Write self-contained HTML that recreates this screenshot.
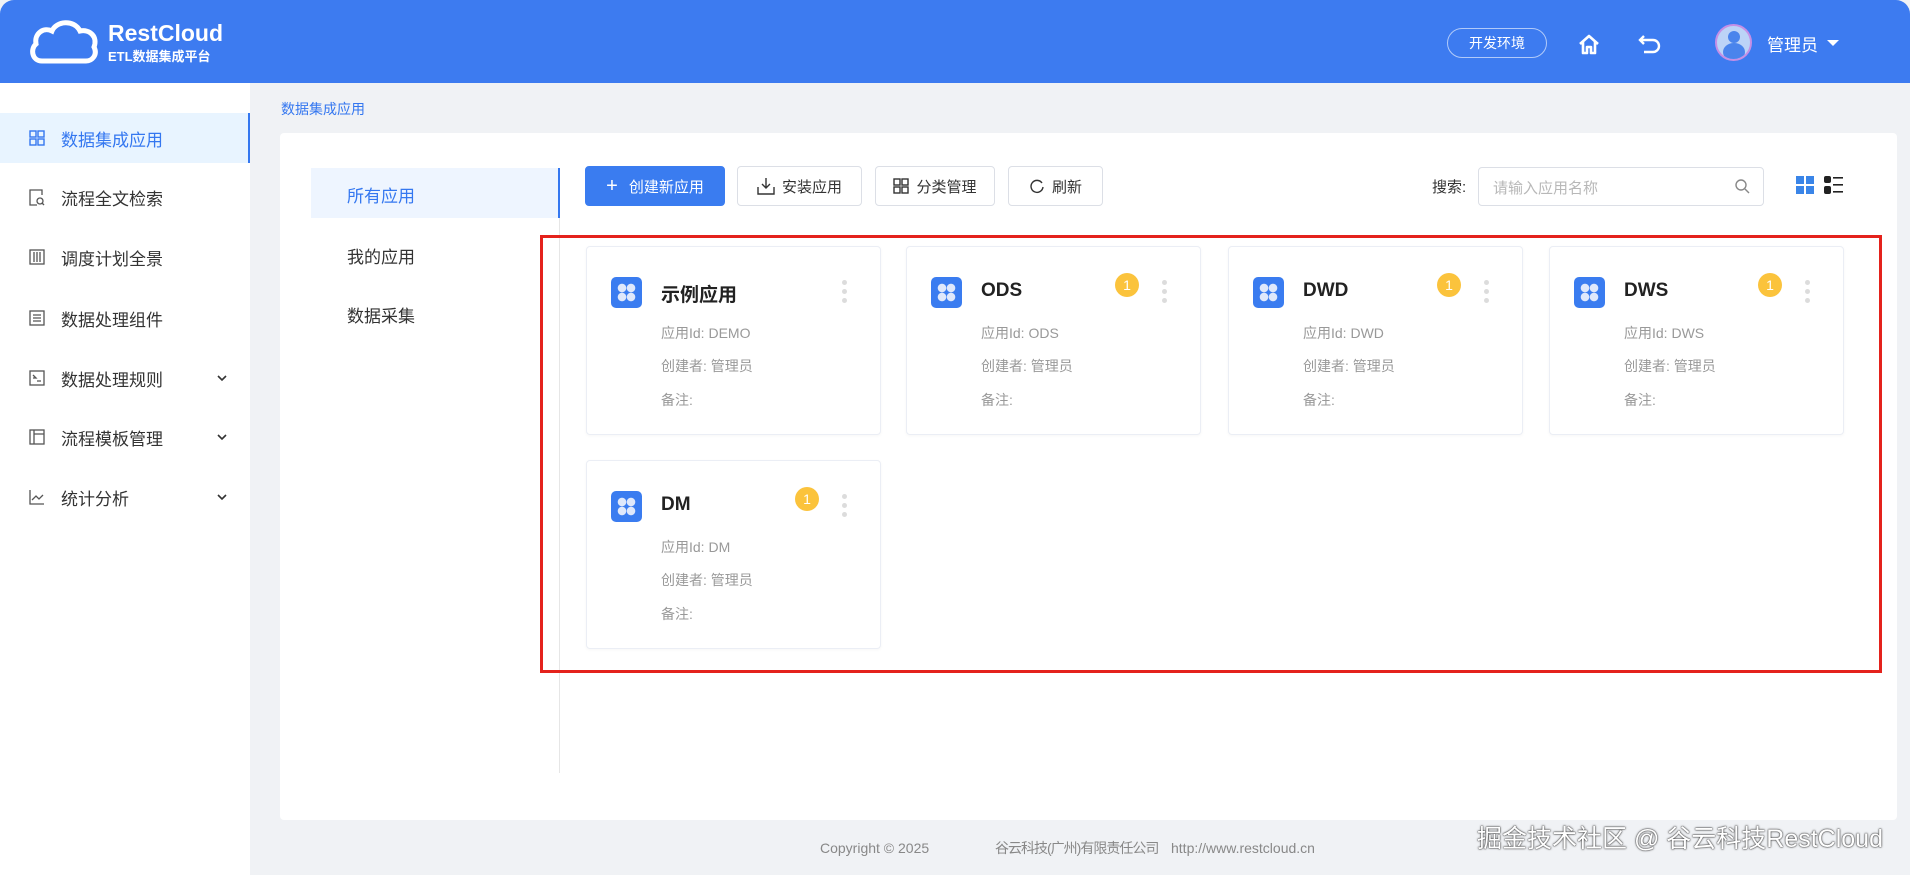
<!DOCTYPE html>
<html><head><meta charset="utf-8">
<style>
*{margin:0;padding:0;box-sizing:border-box}
body{width:1910px;height:875px;overflow:hidden;background:#f0f2f5;font-family:"Liberation Sans","Noto Sans CJK SC",sans-serif;position:relative;color:#333}
.a{position:absolute}
.hdr{left:0;top:0;width:1910px;height:83px;background:#3d7bf0;border-radius:14px 14px 0 0}
.side{left:0;top:83px;width:250px;height:792px;background:#fff}
.mi{position:absolute;left:0;width:250px;height:50px;display:flex;align-items:center;font-size:17px;color:#333}
.mi svg.ico{margin-left:29px;margin-right:16px}
.mi .chev{position:absolute;left:216px;top:21px}
.btn{position:absolute;top:166px;height:40px;border:1px solid #dcdfe6;border-radius:4px;background:#fff;display:flex;align-items:center;justify-content:center;font-size:15px;color:#333;gap:7px}
.card{position:absolute;width:295px;height:189px;background:#fff;border:1px solid #ebeef5;border-radius:4px;box-shadow:0 1px 3px rgba(0,0,0,.04)}
.card .ic{position:absolute;left:24px;top:30px;width:31px;height:31px;border-radius:5px;background:#3a7cf0}
.card .t{position:absolute;left:74px;top:33px;font-size:19px;font-weight:bold;color:#222}
.card .l{position:absolute;left:74px;font-size:14px;color:#999}
.card .bd{position:absolute;left:208px;top:26px;width:24px;height:24px;border-radius:50%;background:#fbc33c;color:#fff;font-size:14px;text-align:center;line-height:24px}
.card .dots{position:absolute;left:255px;top:33px;width:5px}
.card .dots i{display:block;width:5px;height:5px;border-radius:50%;background:#dcdcdc;margin-bottom:4px}
.card .ic::before{content:"";position:absolute;left:6px;top:6px;width:19px;height:19px;background:radial-gradient(circle at 5px 5px,#dfe8fb 4px,transparent 4.5px),radial-gradient(circle at 14px 5px,#dfe8fb 4px,transparent 4.5px),radial-gradient(circle at 5px 14px,#dfe8fb 4px,transparent 4.5px),radial-gradient(circle at 14px 14px,#dfe8fb 4px,transparent 4.5px)}
.ft{position:absolute;top:838px;height:20px;line-height:20px;font-size:14px;color:#888;white-space:nowrap}
</style></head><body>
<div class="a hdr"></div>
<svg class="a" style="left:28px;top:19px" width="72" height="46" viewBox="0 0 72 46"><path d="M14 42 C4 42 2 30 8 25 C6 14 16 8 24 12 C28 2 46 0 52 12 C62 10 70 18 66 28 C70 36 64 42 58 42 Z" fill="none" stroke="#fff" stroke-width="5"/></svg>
<div class="a" style="left:108px;top:20px;color:#fff;font-size:23px;font-weight:bold">RestCloud</div>
<div class="a" style="left:108px;top:46px;color:#fff;font-size:13px;font-weight:bold">ETL数据集成平台</div>
<div class="a" style="left:1447px;top:28px;width:100px;height:30px;border:1px solid rgba(255,255,255,.6);border-radius:15px;color:#fff;font-size:14px;text-align:center;line-height:28px">开发环境</div>
<svg class="a" style="left:1577px;top:32px" width="24" height="24" viewBox="0 0 24 24"><path d="M3 12 L12 4 L21 12 M6 10 V21 H10 V15 H14 V21 H18 V10" fill="none" stroke="#fff" stroke-width="2.6" stroke-linejoin="round"/></svg>
<svg class="a" style="left:1638px;top:32px" width="24" height="24" viewBox="0 0 24 24"><path d="M6 4 L2 8 L6 12 M2 8 H15 A6 6 0 0 1 15 20 H6" fill="none" stroke="#fff" stroke-width="2.4"/></svg>
<div class="a" style="left:1715px;top:24px;width:37px;height:37px;border-radius:50%;background:#bcd3f7;border:2px solid #c58fe6;overflow:hidden"><div style="position:absolute;left:11px;top:5px;width:12px;height:12px;border-radius:50%;background:#4a84ec"></div><div style="position:absolute;left:6px;top:17px;width:22px;height:18px;border-radius:50%;background:#4a84ec"></div></div>
<div class="a" style="left:1767px;top:31px;color:#fff;font-size:17px">管理员</div>
<div class="a" style="left:1827px;top:40px;border-left:6px solid transparent;border-right:6px solid transparent;border-top:6px solid #fff"></div>

<div class="a side"></div>
<div class="mi" style="top:113px;background:#e8f4ff;color:#3477f0;border-right:2px solid #3477f0"><svg class="ico" width="16" height="16" viewBox="0 0 16 16" fill="none" stroke="#3477f0" stroke-width="1.4"><rect x="1" y="1" width="6" height="6"/><rect x="9" y="1" width="6" height="6"/><rect x="1" y="9" width="6" height="6"/><rect x="9" y="9" width="6" height="6"/></svg>数据集成应用</div>
<div class="mi" style="top:172px"><svg class="ico" width="16" height="17" viewBox="0 0 16 17" fill="none" stroke="#555" stroke-width="1.3"><path d="M13 6V1H1v15h7"/><circle cx="11" cy="12" r="3"/><path d="M13 14l2 2"/></svg>流程全文检索</div>
<div class="mi" style="top:232px"><svg class="ico" width="16" height="16" viewBox="0 0 16 16" fill="none" stroke="#555" stroke-width="1.3"><rect x="1" y="1" width="14" height="14"/><path d="M5 3v10M11 3v10M8 3v10"/></svg>调度计划全景</div>
<div class="mi" style="top:293px"><svg class="ico" width="16" height="16" viewBox="0 0 16 16" fill="none" stroke="#555" stroke-width="1.3"><rect x="1" y="1" width="14" height="14"/><path d="M4 5h8M4 8h8M4 11h8"/></svg>数据处理组件</div>
<div class="mi" style="top:353px"><svg class="ico" width="16" height="16" viewBox="0 0 16 16" fill="none" stroke="#555" stroke-width="1.3"><rect x="1" y="1" width="14" height="14"/><path d="M4 5l3 3-3 0M8 11h4"/></svg>数据处理规则<svg class="chev" width="12" height="8" viewBox="0 0 12 8"><path d="M2 2l4 4 4-4" fill="none" stroke="#333" stroke-width="1.6"/></svg></div>
<div class="mi" style="top:412px"><svg class="ico" width="16" height="16" viewBox="0 0 16 16" fill="none" stroke="#555" stroke-width="1.3"><rect x="1" y="1" width="14" height="14"/><path d="M5 1v14M5 5h10"/></svg>流程模板管理<svg class="chev" width="12" height="8" viewBox="0 0 12 8"><path d="M2 2l4 4 4-4" fill="none" stroke="#333" stroke-width="1.6"/></svg></div>
<div class="mi" style="top:472px"><svg class="ico" width="16" height="16" viewBox="0 0 16 16" fill="none" stroke="#555" stroke-width="1.3"><path d="M1 1v14h14M3 11l4-4 3 3 4-4"/></svg>统计分析<svg class="chev" width="12" height="8" viewBox="0 0 12 8"><path d="M2 2l4 4 4-4" fill="none" stroke="#333" stroke-width="1.6"/></svg></div>

<div class="a" style="left:281px;top:99px;font-size:14px;color:#3477f0">数据集成应用</div>
<div class="a" style="left:280px;top:133px;width:1617px;height:687px;background:#fff;border-radius:4px"></div>
<div class="a" style="left:311px;top:168px;width:248px;height:50px;background:#eef5ff"></div>
<div class="a" style="left:558px;top:168px;width:2px;height:50px;background:#3477f0"></div>
<div class="a" style="left:559px;top:218px;width:1px;height:555px;background:#e6e6e6"></div>
<div class="a" style="left:347px;top:182px;font-size:17px;color:#3477f0">所有应用</div>
<div class="a" style="left:347px;top:243px;font-size:17px;color:#333">我的应用</div>
<div class="a" style="left:347px;top:302px;font-size:17px;color:#333">数据采集</div>

<div class="btn" style="left:585px;width:140px;background:#3a7cf0;border-color:#3a7cf0;color:#fff"><span style="font-size:20px;font-weight:300;margin-right:4px">+</span>创建新应用</div>
<div class="btn" style="left:737px;width:125px"><svg width="18" height="18" viewBox="0 0 18 18" fill="none" stroke="#333" stroke-width="1.4"><path d="M9 1v10M5 7l4 4 4-4M1 10v7h16v-7"/></svg>安装应用</div>
<div class="btn" style="left:875px;width:120px"><svg width="16" height="16" viewBox="0 0 16 16" fill="none" stroke="#333" stroke-width="1.4"><rect x="1" y="1" width="6" height="6"/><rect x="9" y="1" width="6" height="6"/><rect x="1" y="9" width="6" height="6"/><rect x="9" y="9" width="6" height="6"/></svg>分类管理</div>
<div class="btn" style="left:1008px;width:95px"><svg width="16" height="16" viewBox="0 0 16 16" fill="none" stroke="#333" stroke-width="1.4"><path d="M13 5A6 6 0 1 0 14 9"/></svg>刷新</div>

<div class="a" style="left:1432px;top:176px;font-size:15px;color:#333">搜索:</div>
<div class="a" style="left:1478px;top:167px;width:286px;height:39px;border:1px solid #dcdfe6;border-radius:4px"></div>
<div class="a" style="left:1493px;top:177px;font-size:15px;color:#b8b8b8">请输入应用名称</div>
<svg class="a" style="left:1734px;top:178px" width="16" height="16" viewBox="0 0 16 16" fill="none" stroke="#888" stroke-width="1.4"><circle cx="7" cy="7" r="5"/><path d="M11 11l4 4"/></svg>
<svg class="a" style="left:1796px;top:176px" width="18" height="18" viewBox="0 0 18 18" fill="#3a85e8"><rect x="0" y="0" width="8" height="8"/><rect x="10" y="0" width="8" height="8"/><rect x="0" y="10" width="8" height="8"/><rect x="10" y="10" width="8" height="8"/></svg>
<svg class="a" style="left:1824px;top:176px" width="19" height="18" viewBox="0 0 19 18" fill="#222"><rect x="0" y="0" width="7" height="7" rx="2"/><rect x="0" y="10" width="7" height="8" rx="2"/><rect x="9" y="1" width="10" height="1.6"/><rect x="9" y="8" width="10" height="1.6"/><rect x="9" y="15" width="10" height="1.6"/></svg>

<div class="a" style="left:540px;top:235px;width:1342px;height:438px;border:3px solid #e4221c"></div>

<div class="card" style="left:586px;top:246px"><div class="ic"></div><div class="t">示例应用</div><div class="l" style="top:76px">应用Id: DEMO</div><div class="l" style="top:109px">创建者: 管理员</div><div class="l" style="top:143px">备注:</div><div class="dots"><i></i><i></i><i></i></div></div>
<div class="card" style="left:906px;top:246px"><div class="ic"></div><div class="t">ODS</div><div class="l" style="top:76px">应用Id: ODS</div><div class="l" style="top:109px">创建者: 管理员</div><div class="l" style="top:143px">备注:</div><div class="bd">1</div><div class="dots"><i></i><i></i><i></i></div></div>
<div class="card" style="left:1228px;top:246px"><div class="ic"></div><div class="t">DWD</div><div class="l" style="top:76px">应用Id: DWD</div><div class="l" style="top:109px">创建者: 管理员</div><div class="l" style="top:143px">备注:</div><div class="bd">1</div><div class="dots"><i></i><i></i><i></i></div></div>
<div class="card" style="left:1549px;top:246px"><div class="ic"></div><div class="t">DWS</div><div class="l" style="top:76px">应用Id: DWS</div><div class="l" style="top:109px">创建者: 管理员</div><div class="l" style="top:143px">备注:</div><div class="bd">1</div><div class="dots"><i></i><i></i><i></i></div></div>
<div class="card" style="left:586px;top:460px"><div class="ic"></div><div class="t">DM</div><div class="l" style="top:76px">应用Id: DM</div><div class="l" style="top:109px">创建者: 管理员</div><div class="l" style="top:143px">备注:</div><div class="bd">1</div><div class="dots"><i></i><i></i><i></i></div></div>

<div class="ft" style="left:820px">Copyright © 2025</div>
<div class="ft" style="left:995px;letter-spacing:-1px">谷云科技(广州)有限责任公司</div>
<div class="ft" style="left:1171px">http://www.restcloud.cn</div>
<div class="a" style="left:1477px;top:819px;font-size:25px;color:#fff;text-shadow:0 0 2px #333,0 0 1px #000;white-space:nowrap">掘金技术社区 @ 谷云科技RestCloud</div>
</body></html>
